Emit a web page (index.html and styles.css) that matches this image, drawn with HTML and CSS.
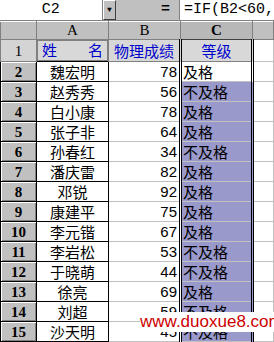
FILE: index.html
```html
<!DOCTYPE html>
<html lang="zh">
<head>
  <meta charset="utf-8">
  <title>物理成绩</title>
  <link rel="stylesheet" href="styles.css">
</head>
<body>
  <div class="formula-bar">
    <div class="name-box">C2</div>
    <div class="drop-btn">&#9660;</div>
    <div class="eq-area">=</div>
    <div class="formula">=IF(B2&lt;60,</div>
  </div>

  <table class="sheet">
    <colgroup>
      <col class="c-hdr"><col class="c-a"><col class="c-b"><col class="c-c"><col>
    </colgroup>
    <tr class="col-head">
      <th class="corner"></th>
      <th>A</th>
      <th>B</th>
      <th class="sel">C</th>
      <th></th>
    </tr>
    <tr class="title-row">
      <th class="row-num flat">1</th>
      <td class="name-title"><span>姓</span><span>名</span></td>
      <td class="score-title">物理成绩</td>
      <td class="grade-title">等级</td>
      <td class="blank"></td>
    </tr>
    <tbody id="rows"></tbody>
  </table>

  <div class="watermark">www.duoxue8.com</div>

  <script>
    var data = [
      ['魏宏明', 78], ['赵秀秀', 56], ['白小康', 78], ['张子非', 64],
      ['孙春红', 34], ['潘庆雷', 82], ['邓锐', 92], ['康建平', 75],
      ['李元锴', 67], ['李岩松', 53], ['于晓萌', 44], ['徐亮', 69],
      ['刘超', 59], ['沙天明', 45]
    ];
    var rows = document.getElementById('rows');
    data.forEach(function (d, i) {
      var tr = document.createElement('tr');
      var grade = d[1] < 60 ? '不及格' : '及格';
      var cls = i === 0 ? 'grade active' : 'grade';
      tr.innerHTML = '<th class="row-num">' + (i + 2) + '</th>' +
        '<td class="name">' + d[0] + '</td>' +
        '<td class="score">' + d[1] + '</td>' +
        '<td class="' + cls + '">' + grade + '</td>' +
        '<td class="blank"></td>';
      rows.appendChild(tr);
    });
  </script>
</body>
</html>
```

FILE: styles.css
```css
body {
  margin: 0;
  background: #fff;
  font-family: "Noto Sans CJK SC", "Liberation Sans", sans-serif;
  overflow: hidden;
  width: 274px;
  height: 342px;
}

.formula-bar {
  display: flex;
  height: 21px;
  background: #c0c0c0;
  border-bottom: 1px solid #808080;
  box-sizing: border-box;
  font-family: "Liberation Mono", "DejaVu Sans Mono", monospace;
  font-size: 15px;
}
.name-box {
  width: 110px;
  background: #fff;
  text-align: center;
  line-height: 20px;
  border-right: 1px solid #808080;
  box-sizing: border-box;
}
.drop-btn {
  width: 14px;
  font-size: 8px;
  text-align: center;
  line-height: 18px;
  border-top: 1px solid #fff;
  border-left: 1px solid #fff;
  border-right: 1px solid #404040;
  border-bottom: 1px solid #404040;
  box-sizing: border-box;
}
.eq-area {
  width: 67px;
  text-align: right;
  padding-right: 9px;
  box-sizing: border-box;
  font-weight: bold;
  line-height: 20px;
}
.formula {
  flex: 1;
  background: #fff;
  white-space: nowrap;
  padding-left: 4px;
  line-height: 20px;
  border-left: 1px solid #808080;
}

.sheet {
  border-collapse: collapse;
  table-layout: fixed;
  width: 274px;
}
.c-hdr { width: 36px; }
.c-a { width: 72px; }
.c-b { width: 72px; }
.c-c { width: 72px; }

.sheet th, .sheet td {
  padding: 0;
  white-space: nowrap;
}

.col-head th {
  height: 17px;
  background: #c0c0c0;
  border: 1px solid #808080;
  border-top-color: #fff;
  font-family: "Liberation Serif", serif;
  font-weight: normal;
  font-size: 15px;
  line-height: 17px;
}
.col-head th.sel {
  font-weight: bold;
  background: #b8b8b8;
  border-bottom: 1px solid #404040;
}

.row-num {
  height: 19px;
  background: #c0c0c0;
  border: 1px solid #000;
  box-shadow: inset 1px 1px 0 #fff, inset -1px -1px 0 #808080;
  font-family: "Liberation Serif", serif;
  font-weight: bold;
  font-size: 15px;
  line-height: 18px;
}
.row-num.flat {
  font-weight: normal;
  background: #d4d4d4;
  box-shadow: none;
  border-color: #808080;
}

.title-row td {
  background: #d8d8d8;
  color: #0000cc;
  font-size: 15px;
  line-height: 18px;
  border: 1px solid #808080;
}
.name-title {
  display: flex;
  justify-content: space-between;
  padding: 0 4px !important;
  height: 19px;
}
.score-title { text-align: center; }
.grade-title {
  text-align: center;
  border-left: 3px double #000 !important;
  border-right: 3px double #000 !important;
}
.title-row td.blank {
  background: #fff;
  border: 1px solid #c0c0c0;
}

.name {
  text-align: center;
  font-size: 15px;
  border: 1px solid #000;
  height: 19px;
  line-height: 18px;
}
.score {
  text-align: right;
  padding-right: 2px !important;
  font-family: "Liberation Sans", sans-serif;
  font-size: 15px;
  border: 1px solid #c0c0c0;
  border-left-color: #000;
}
.grade {
  background: #9999cc;
  font-size: 15px;
  line-height: 18px;
  padding-left: 1px !important;
  border-left: 3px double #000;
  border-right: 3px double #000;
  border-top: 1px solid #c0c0c0;
  border-bottom: 1px solid #c0c0c0;
}
.grade.active {
  background: #fff;
  border-top: 1px solid #000;
}
.blank {
  border: 1px solid #c0c0c0;
}

.watermark {
  position: absolute;
  left: 140px;
  top: 312px;
  width: 134px;
  height: 20px;
  background: #fff;
  color: #cc0000;
  font-family: "Liberation Sans", sans-serif;
  font-size: 17px;
  line-height: 20px;
  text-align: center;
}
```
